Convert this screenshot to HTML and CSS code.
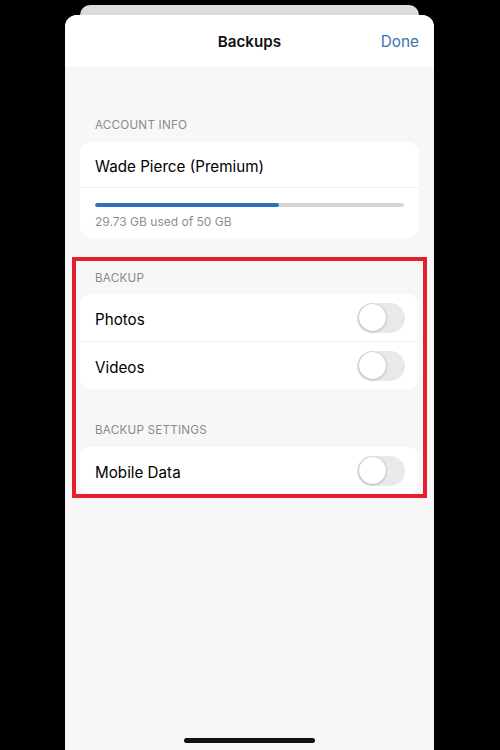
FILE: index.html
```html
<!DOCTYPE html>
<html>
<head>
<meta charset="utf-8">
<link rel="stylesheet" href="styles.css">
</head>
<body>
<div class="stage">
  <div class="backcard"></div>
  <div class="sheet">
    <div class="navbar">
      <span class="nav-spacer"></span>
      <span class="nav-title">Backups</span>
      <span class="nav-done">Done</span>
    </div>
    <div class="content">
      <div class="section-label first">ACCOUNT INFO</div>
      <div class="card">
        <div class="row account-row"><span class="row-label">Wade Pierce (Premium)</span></div>
        <div class="usage">
          <div class="bar"><div class="bar-fill" style="width:59.46%"></div></div>
          <div class="usage-text">29.73 GB used of 50 GB</div>
        </div>
      </div>

      <div class="section-label">BACKUP</div>
      <div class="card">
        <div class="row"><span class="row-label">Photos</span><span class="toggle"><span class="knob"></span></span></div>
        <div class="row"><span class="row-label">Videos</span><span class="toggle"><span class="knob"></span></span></div>
      </div>

      <div class="section-label tall">BACKUP SETTINGS</div>
      <div class="card">
        <div class="row"><span class="row-label">Mobile Data</span><span class="toggle"><span class="knob"></span></span></div>
      </div>
    </div>
    <div class="highlight"></div>
    <div class="home-indicator"></div>
  </div>
</div>
</body>
</html>
```

FILE: styles.css
```css
html, body {
  margin: 0;
  padding: 0;
  background: #000;
}
body {
  font-family: Inter, "Noto Sans", sans-serif;
  color: #000;
}
.stage {
  width: 500px;
  height: 750px;
  padding-top: 5px;
  box-sizing: border-box;
  overflow: hidden;
}
.backcard {
  height: 20px;
  margin: 0 81px 0 80px;
  background: #dcdcdc;
  border-radius: 10px 10px 0 0;
}
.sheet {
  position: relative;
  margin: -10px 66px 0 65px;
  height: 735px;
  background: #f7f7f7;
  border-radius: 12px 12px 0 0;
  overflow: hidden;
}
.navbar {
  height: 52px;
  background: #fff;
  display: flex;
  align-items: center;
  justify-content: space-between;
  padding: 0 15px;
}
.nav-spacer {
  width: 38px;
}
.nav-title {
  font-weight: 600;
  font-size: 15.2px;
  color: #111;
}
.nav-done {
  font-size: 15.3px;
  color: #3a72ad;
}
.content {
  padding: 0 15px;
}
.section-label {
  font-size: 11.7px;
  line-height: 16px;
  color: #8a8a8e;
  padding: 0 15px;
  margin-top: 32px;
  margin-bottom: 8px;
  letter-spacing: 0.2px;
}
.section-label.first {
  margin-top: 50px;
  margin-bottom: 9px;
}
.section-label.tall {
  margin-top: 33px;
  margin-bottom: 9px;
}
.card {
  background: #fff;
  border-radius: 11px;
  overflow: hidden;
}
.row {
  height: 47px;
  display: flex;
  align-items: center;
  justify-content: space-between;
  padding: 0 14px 0 15px;
  font-size: 15.2px;
}
.row.account-row {
  height: 45px;
}
.row-label {
  padding-top: 3px;
}
.row + .row, .row + .usage {
  border-top: 1px solid #f0f0f0;
}
.usage {
  padding: 15px 15px 8px 15px;
}
.bar {
  height: 4px;
  background: #d6d6d8;
  border-radius: 2px;
  overflow: hidden;
}
.bar-fill {
  height: 100%;
  background: #2f6fc0;
  border-radius: 2px;
}
.usage-text {
  margin-top: 7px;
  font-size: 12px;
  line-height: 16px;
  color: #8e8e92;
}
.toggle {
  width: 48px;
  height: 30px;
  border-radius: 15px;
  background: #e9e9eb;
  display: flex;
  align-items: center;
  padding: 0 1.5px;
  box-sizing: border-box;
}
.knob {
  width: 27px;
  height: 27px;
  border-radius: 50%;
  background: #fff;
  box-shadow: 0 1px 3px rgba(0,0,0,0.18), 0 0 0 0.6px rgba(0,0,0,0.12);
}
.highlight {
  position: absolute;
  left: 7px;
  top: 242px;
  width: 355px;
  height: 241px;
  border: 4px solid #e3202c;
  box-sizing: border-box;
}
.home-indicator {
  position: absolute;
  left: 119px;
  bottom: 7px;
  width: 131px;
  height: 5px;
  border-radius: 3px;
  background: #111;
}
```
